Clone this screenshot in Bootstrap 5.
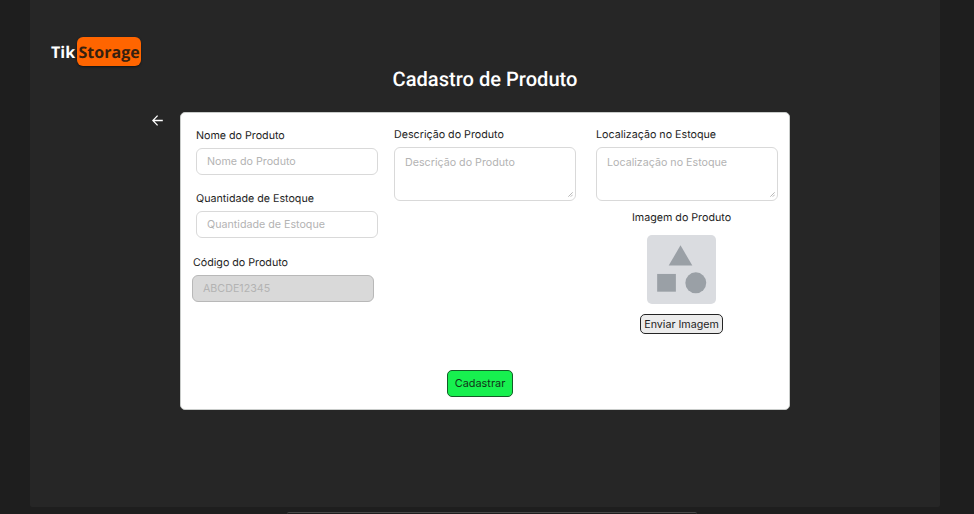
<!DOCTYPE html>
<html lang="pt-BR">
<head>
<meta charset="utf-8">
<meta name="viewport" content="width=device-width, initial-scale=1">
<title>TikStorage - Cadastro de Produto</title>
<link href="https://cdn.jsdelivr.net/npm/bootstrap@5.3.0/dist/css/bootstrap.min.css" rel="stylesheet">
<style>
body { background: #1e1e1e; font-family: Inter, "Liberation Sans", sans-serif; font-size: 10.7px; line-height: 16px; height: 514px; color: #1e1e1e; text-rendering: geometricPrecision; }
.app-frame { width: 910px; height: 507px; margin-left: 30px; background: #262626; border-radius: 0 0 2px 2px; padding-top: 37px; }
.brand { height: 29px; margin-left: 21px; font: 700 16px/30px "Open Sans", sans-serif; }
.brand-box { width: 64px; margin-left: 2px; background: #ff6500; color: #36200f; border-radius: 6px; box-shadow: 0 1px 2px rgba(0,0,0,.5); }
.page-title { font: 500 20.1px/26px Roboto, sans-serif; height: 26px; }
.card-row { margin-top: 20px; }
.back-link { width: 11px; height: 11px; margin: 3px 17px 0 122px; }
.product-card { width: 609.5px; height: 298px; border-radius: 5px; border: 1px solid #c9ccca; padding: 14px 0 0 10px; }
.top-row { height: 243px; }
.field-col { width: 182px; }
.form-label { height: 16px; white-space: nowrap; }
.form-control { font-size: 10.7px; line-height: 16px; padding: 5px 10px; height: 27px; border: 1px solid #d9d9d9; border-radius: 6px; }
.form-control::placeholder { color: #b3b3b3; }
.form-control:disabled { background: #d9d9d9; border-color: #b8b8b8; }
textarea.form-control { height: 54px; padding-top: 7px; resize: none; }
.grip { right: 3px; bottom: 4px; width: 5px; height: 5px; }
.col-a { margin: 1px 0 0 5px; }
.col-a .form-control { margin-top: 4px; }
.fg2 { margin-top: 16px; }
.fg3 { width: 182px; margin: 17px 0 0 -4px; }
.fg3 .form-label { padding-left: 1px; }
.col-b { margin-left: 16px; }
.col-c { margin-left: 20px; }
.col-b > .form-label, .col-c > .form-label { margin-bottom: 4px; }
.upload { padding-top: 9px; margin-left: -11px; }
.thumb { margin: 9px 0 10px; }
.btn-send { width: 83px; height: 20px; font-size: 10.7px; line-height: 19px; border: 1px solid #252525; border-radius: 5px; background: #ececec; color: #1e1e1e; }
.btn-save { width: 66px; height: 27px; margin-left: 256px; font-size: 10.9px; line-height: 25px; border: 1px solid #145c28; border-radius: 5px; background: #17f04f; color: #103418; }
.bottom-bar { width: 410px; height: 2px; margin: 5px 0 0 287px; border-top: 1px solid #484848; border-radius: 5px 5px 0 0; }
</style>
<script src="https://cdn.jsdelivr.net/npm/bootstrap@5.3.0/dist/js/bootstrap.bundle.min.js"></script>
</head>
<body class="overflow-hidden">
<main class="app-frame">
  <div class="brand d-flex text-white"><span>Tik</span><span class="brand-box text-center">Storage</span></div>
  <h1 class="page-title text-white text-center mb-0">Cadastro de Produto</h1>
  <div class="d-flex card-row">
    <a href="#" class="back-link d-block" aria-label="Voltar"><svg class="d-block" width="11" height="11" viewBox="0 0 11 11" fill="none" stroke="#fff" stroke-width="1.3"><path d="M10.8 5.5H.8M5.6.6.8 5.5l4.8 4.9"/></svg></a>
    <form class="product-card bg-white">
      <div class="d-flex top-row">
        <div class="field-col col-a">
          <div class="fg1"><label class="form-label d-block mb-0" for="nome">Nome do Produto</label><input id="nome" class="form-control" placeholder="Nome do Produto"></div>
          <div class="fg2"><label class="form-label d-block mb-0" for="qtd">Quantidade de Estoque</label><input id="qtd" class="form-control" placeholder="Quantidade de Estoque"></div>
          <div class="fg3"><label class="form-label d-block mb-0" for="cod">Código do Produto</label><input id="cod" class="form-control" placeholder="ABCDE12345" disabled></div>
        </div>
        <div class="field-col col-b">
          <label class="form-label d-block" for="desc">Descrição do Produto</label>
          <div class="position-relative"><textarea id="desc" class="form-control" placeholder="Descrição do Produto"></textarea><svg class="grip position-absolute" viewBox="0 0 5 5" stroke="#999" stroke-width=".7"><path d="M.3 4.7 4.7.3M2.7 4.7l2-2"/></svg></div>
        </div>
        <div class="field-col col-c">
          <label class="form-label d-block" for="loc">Localização no Estoque</label>
          <div class="position-relative"><textarea id="loc" class="form-control" placeholder="Localização no Estoque"></textarea><svg class="grip position-absolute" viewBox="0 0 5 5" stroke="#999" stroke-width=".7"><path d="M.3 4.7 4.7.3M2.7 4.7l2-2"/></svg></div>
          <div class="upload d-flex flex-column align-items-center">
            <span class="form-label mb-0">Imagem do Produto</span>
            <svg class="thumb" width="69" height="69" viewBox="0 0 70 70"><rect width="70" height="70" rx="5" fill="#dadce0"/><g fill="#9aa0a6"><path d="M34 10.5 46 31H22z"/><path d="M10.3 39.5h19v18h-19z"/><circle cx="49.5" cy="48.5" r="10.6"/></g></svg>
            <button type="button" class="btn btn-send p-0">Enviar Imagem</button>
          </div>
        </div>
      </div>
      <button type="button" class="btn btn-save p-0 d-block">Cadastrar</button>
    </form>
  </div>
</main>
<div class="bottom-bar"></div>
</body>
</html>
